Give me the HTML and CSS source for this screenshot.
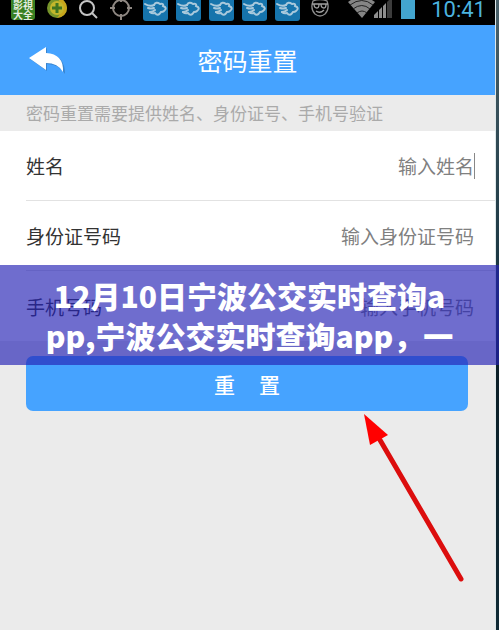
FILE: index.html
```html
<!DOCTYPE html>
<html lang="zh-CN">
<head>
    <meta charset="UTF-8">
    <meta name="viewport" content="width=device-width, initial-scale=1.0">
    <title>密码重置</title>
    <link rel="stylesheet" href="styles.css">
</head>
<body>

<svg class="symbols" aria-hidden="true">
    <symbol id="cloud" viewBox="0 0 25 25">
        <path d="M0 0H25V18Q25 21 22 21H3Q0 21 0 18Z" fill="#1674ac"/>
        <path d="M2 4Q7 7 11 5M5 8Q8 9 11 8M7 12Q10 12 12 10" fill="none" stroke="#a9c9dc" stroke-width="2" stroke-linecap="round"/>
        <path d="M11 5Q13 1 17 4Q21 3 20 6Q25 8 21 11Q20 12 18 12Q15 17 12 13Q9 14 7 12" fill="none" stroke="#a9c9dc" stroke-width="2" stroke-linecap="round"/>
    </symbol>
</svg>

<div class="phone">
    <div class="status-bar">
        <div class="movie-icon">影視<br>大全</div>
        <div class="status-icons">
            <svg width="22" height="25" viewBox="0 0 22 25">
                <circle cx="11" cy="8" r="10" fill="#76932a"/>
                <path d="M11-2A10 10 0 0 1 11 18Q20 8 11-2Z" fill="#c7a51c"/>
                <circle cx="11" cy="8" r="7" fill="#c2b62b"/>
                <path d="M11 3V13M6 8H16" stroke="#3f7420" stroke-width="3"/>
            </svg>
            <svg width="22" height="25" viewBox="0 0 22 25">
                <circle cx="9" cy="8" r="7" fill="none" stroke="#c4c4c4" stroke-width="2"/>
                <path d="M14 13L19 18" stroke="#c4c4c4" stroke-width="2"/>
            </svg>
            <svg width="22" height="25" viewBox="0 0 22 25">
                <circle cx="11" cy="8" r="8" fill="none" stroke="#8f8883" stroke-width="2"/>
                <path d="M0 8H5M17 8H22M11 14V20M11-2V2" stroke="#8f8883" stroke-width="2"/>
            </svg>
        </div>
        <div class="clouds">
            <svg width="25" height="25"><use href="#cloud"/></svg>
            <svg width="25" height="25"><use href="#cloud"/></svg>
            <svg width="25" height="25"><use href="#cloud"/></svg>
            <svg width="25" height="25"><use href="#cloud"/></svg>
            <svg width="25" height="25"><use href="#cloud"/></svg>
        </div>
        <svg width="18" height="25" viewBox="0 0 18 25">
            <path d="M2 1Q9-2 16 1Q19 9 14 14Q9 18 4 14Q-1 9 2 1Z" fill="none" stroke="#8b8b8b" stroke-width="1.3"/>
            <path d="M1 4H17M3 4Q3 8 6 8Q8 8 8 4M10 4Q10 8 13 8Q15 8 15 4M5 11Q9 14 13 10" fill="none" stroke="#a0a0a0" stroke-width="1.3"/>
        </svg>
        <div class="signals">
            <svg width="46" height="25" viewBox="0 0 46 25">
                <path d="M0 2Q13-8 27 2L14 18Z" fill="#858585"/>
                <path d="M2 5Q14-4 25 5M5 9Q14 2 22 9M9 13Q14 9 19 13" fill="none" stroke="#222" stroke-width="1"/>
                <path d="M26 18V15L30 11V18ZM31 18V10L34 7V18ZM35 18V6L38 3V18Z" fill="#8e8e8e"/>
                <path d="M39 18V2L44-3V18Z" fill="#3c3c3c"/>
            </svg>
            <svg width="14" height="25" viewBox="0 0 14 25"><path d="M0 0H14V19H0Z" fill="#43a5cf"/></svg>
        </div>
        <time class="clock">10:41</time>
    </div>

    <header class="title-bar">
        <button class="back-btn" type="button" aria-label="返回">
            <svg width="36" height="28" viewBox="0 0 36 28">
                <path d="M18 2V8Q36 9 36 28Q30 18 18 18V25L1 13Z" fill="#2f6fae" opacity=".6"/>
                <path d="M17 1V7Q35 8 34 26Q29 17 17 17V24L0 12Z" fill="#fff"/>
            </svg>
        </button>
        <h1>密码重置</h1>
    </header>

    <p class="hint">密码重置需要提供姓名、身份证号、手机号验证</p>

    <form class="reset-form">
        <div class="fields">
            <div class="field">
                <label for="name">姓名</label>
                <input class="active" type="text" id="name" placeholder="输入姓名">
            </div>
            <div class="field">
                <label for="idNumber">身份证号码</label>
                <input type="text" id="idNumber" placeholder="输入身份证号码">
            </div>
            <div class="field">
                <label for="mobile">手机号码</label>
                <input type="tel" id="mobile" placeholder="输入手机号码">
            </div>
        </div>
        <button class="reset-btn" type="submit"><span>重</span><span>置</span></button>
    </form>

    <div class="banner">12月10日宁波公交实时查询app,宁波公交实时查询app，一</div>

    <svg class="pointer" width="104" height="172" viewBox="0 0 104 172" aria-hidden="true">
        <path d="M17 27L98 166" stroke="#dc0d0d" stroke-width="5" stroke-linecap="round"/>
        <path d="M1 1L25 22L7 32Z" fill="#f00"/>
    </svg>
</div>

</body>
</html>
```

FILE: styles.css
```css
* {
    box-sizing: border-box;
}

body {
    margin: 0;
    padding-right: 3px;
    min-height: 100vh;
    background: linear-gradient(#4b626b, #183440 45%, #0b1f28 60%, #102a35);
    font-family: "Noto Sans CJK SC", sans-serif;
    color: #333;
}

.symbols {
    display: none;
}

.phone {
    position: relative;
    min-height: 100vh;
    background-color: #ebebeb;
    border-right: 1px solid #dfe8ea;
}

/* Android status bar */
.status-bar {
    display: flex;
    align-items: flex-start;
    gap: 11px;
    height: 25px;
    padding: 0 9px 0 11px;
    overflow: hidden;
    background-color: #000;
}

.status-bar svg {
    display: block;
}

.movie-icon {
    width: 24px;
    height: 20px;
    border-radius: 0 0 3px 3px;
    background-color: #398023;
    color: #e4eddf;
    font-size: 10px;
    font-weight: bold;
    line-height: 10px;
    text-align: center;
}

.status-icons {
    display: flex;
    gap: 10px;
}

.clouds {
    display: flex;
    gap: 8px;
}

.signals {
    display: flex;
    gap: 7px;
    margin-left: 8px;
}

.clock {
    margin-left: auto;
    font-family: Roboto, sans-serif;
    font-size: 22px;
    line-height: 20px;
    color: #4cb3df;
}

/* Title */
.title-bar {
    display: grid;
    grid-template-columns: 66px 1fr 66px;
    align-items: center;
    height: 70px;
    background-color: #46a3ff;
    color: #fff;
}

.title-bar h1 {
    margin: 0;
    font-size: 25px;
    font-weight: normal;
    line-height: 36px;
    text-align: center;
}

.back-btn {
    padding: 0 0 0 29px;
    border: none;
    background: none;
    cursor: pointer;
}

.back-btn svg {
    display: block;
}

.hint {
    margin: 0;
    padding: 0 26px;
    font-size: 17px;
    line-height: 36px;
    color: #aaa;
}

/* Form */
.fields {
    padding-left: 26px;
    background-color: #fff;
}

.field {
    display: flex;
    align-items: center;
    justify-content: space-between;
    height: 70px;
    padding-right: 20px;
    border-bottom: 1px solid #e2e2e2;
    font-size: 19px;
}

.field:last-child {
    border-bottom: none;
}

.field input {
    flex: 1;
    min-width: 0;
    height: 26px;
    padding: 0;
    border: none;
    border-right: 1px solid transparent;
    outline: none;
    background: none;
    font: inherit;
    text-align: right;
}

.field input.active {
    border-right-color: #888;
}

.field input::placeholder {
    color: #808080;
}

.reset-btn {
    display: flex;
    align-items: center;
    justify-content: center;
    gap: 24px;
    width: calc(100% - 53px);
    height: 55px;
    margin: 15px 27px 0 26px;
    padding: 0;
    border: none;
    border-radius: 7px;
    background-color: #46a3ff;
    color: #fff;
    font-family: inherit;
    font-size: 21px;
    font-weight: 500;
    cursor: pointer;
}

/* Caption lying over the form */
.banner {
    position: absolute;
    top: 265px;
    left: 0;
    right: -4px;
    padding: 10px 45px;
    background-color: rgba(37, 33, 181, 0.66);
    color: #fff;
    font-size: 30px;
    font-weight: 900;
    line-height: 40px;
    text-align: center;
    word-break: break-all;
}

.pointer {
    position: absolute;
    top: 413px;
    right: 28px;
}
```
